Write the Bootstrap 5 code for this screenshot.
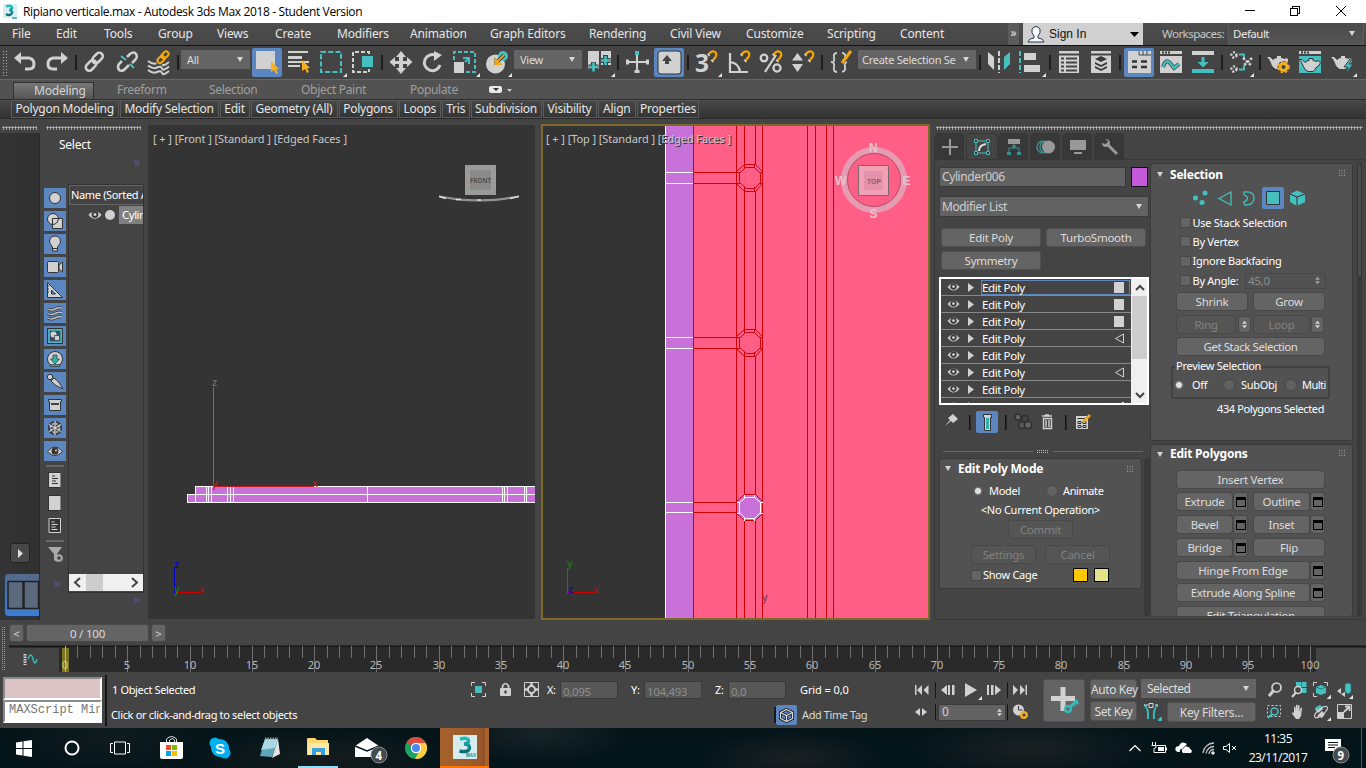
<!DOCTYPE html>
<html lang="en">
<head>
<meta charset="utf-8">
<title>Ripiano verticale.max - Autodesk 3ds Max 2018 - Student Version</title>
<meta name="viewport" content="width=device-width, initial-scale=1">
<link href="https://cdn.jsdelivr.net/npm/bootstrap@5.3.0/dist/css/bootstrap.min.css" rel="stylesheet">
<style>
body{width:1366px;height:768px;overflow:hidden;background:#444;color:#e6e6e6;font-family:"Noto Sans","Open Sans",sans-serif;font-size:11px;line-height:14px;letter-spacing:-.27px}
svg{display:block;overflow:visible;flex:none}
svg text{letter-spacing:0}
.ln{white-space:nowrap}
.titlebar{height:23px;background:#fff;color:#000;font-family:"Open Sans",sans-serif;font-size:12px;letter-spacing:-.36px}
.titletext{padding-left:4px}
.menubar{height:23px;background:linear-gradient(#4d4d4d,#464646);border-bottom:1px solid #111;font-size:12px;line-height:22px}
.menugrid{display:grid;flex:none;grid-template-columns:44px 48px 54px 59px 58px 62px 73px 80px 99px 81px 76px 81px 73px 108px;padding-left:12px;width:1008px;letter-spacing:-.15px}
.more{width:11px;flex:none;background:#5c5c5c;border-radius:2px;line-height:19px}
.signin{width:120px;flex:none;height:22px;background:#d0d0d0;color:#111;font-family:"Liberation Sans",sans-serif;letter-spacing:0}
.wslabel{width:85px;flex:none;text-align:right;padding-right:4px;color:#c8c8c8;letter-spacing:-.55px;font-size:11.5px}
.wsbox{width:136px;flex:none;background:linear-gradient(#4a4a4a,#555);border:1px solid #5c5c5c;border-top:0;font-size:11.5px;letter-spacing:-.5px}
.toolgrid{height:33px;display:grid;align-items:start;grid-template-columns:13px 32px 30px 8px 33px 30px 31px 4px 71px 34px 33px 31px 31px 8px 32px 31px 33px 29px 73px 30px 8px 29px 33px 7px 33px 32px 32px 30px 8px 29px 121px 8px 31px 31px 9px 32px 29px 5px 35px 32px 30px 8px 30px 8px 31px 33px 35px}
.toolgrid>svg{margin-top:4px;width:26px;height:28px}
.vsep{width:2px;background:#1d1d1d;height:15px;margin-top:9px}
.hot{background:#5c86c0;border-radius:2px}
.toolhot{width:30px;height:29px;margin-top:2px;padding:2px 0 0 2px}
.drop{background:#646464;height:19px;color:#dcdcdc;padding-left:6px;padding-right:7px}
.toolgrid .drop{margin-top:4px}
.grip-v{width:6px;background-image:radial-gradient(#a2a2a2 38%,transparent 48%);background-size:3px 3px}
.grip-h{height:4px;background-image:radial-gradient(#b0b0b0 45%,transparent 60%);background-size:3px 3px}
.ribtabs{height:20px;background:#525252;border-top:1px solid #666;color:#a0a0a0;font-size:12px;letter-spacing:-.3px;line-height:20px}
.ribgrid{display:grid;grid-template-columns:104px 92px 92px 109px 79px 40px;padding-left:13px;width:540px}
.rib-on{width:81px;height:17px;margin-top:2px;line-height:15px;background:linear-gradient(#777,#555);border:1px solid #303030;border-bottom:0;color:#d4d4d4;padding-left:20px;letter-spacing:-.2px}
.ribpanels{height:20px;background:linear-gradient(#484848,#333);border-top:1px solid #2c2c2c;border-bottom:1px solid #2a2a2a}
.ribbtns{display:grid;grid-template-columns:108.5px 100px 31px 88px 60px 43.5px 28.5px 72px 55px 39.5px 63px;margin-left:11px;font-size:12px;line-height:16px;letter-spacing:-.24px}
.ribbtns>span{border:1px solid #5b5b5b;height:18px;text-align:center;margin-right:1px;white-space:nowrap}
.work{height:505px}
.dockleft{width:40px;padding:7px 0 0 0}
.dockdark{margin-top:3px;height:487px;background:linear-gradient(90deg,#343434,#303030);padding-top:410px;overflow:hidden;border-right:1px solid #282828}
.playbtn{width:20px;height:20px;margin-left:10px;border:1px solid #232323;border-radius:3px;background:#484848}
.layoutbtn{width:37px;height:44px;margin:10px 0 0 4px;border:1px solid #243850;border-radius:4px 0 0 4px;background:linear-gradient(#556a88,#3c7dd6)}
.explorer{width:108px;padding:7px 0 0 4px}
.chev{color:#56568e;font-size:14px;line-height:8px}
.filtercol{width:22px;display:grid;grid-auto-rows:20px;row-gap:3px}
.filtercol>svg.f{width:22px;height:20px;background:#5c86c0}
.listbox{width:76px;height:409px;border:1px solid #333;overflow:hidden}
.listhead{height:20px;border:1px solid #666;border-width:1px 0 1px 1px;line-height:18px;padding-left:1px;color:#fff;letter-spacing:-.35px}
.objname{background:#808080;margin-left:2px;height:18px;line-height:18px;width:40px;padding-left:3px;color:#fff;font-size:11.5px;letter-spacing:-.5px}
.scrollx{height:17px;background:#f0f0f0}
.view-a{margin-top:6px;width:387px;height:494px;background:#343434}
.view-b{margin:5px 0 0 6px;width:389px;height:496px;border:2px solid #7d6a28}
.cmd{margin-left:4px;width:432px;padding-top:7px}
.tabs6{display:grid;grid-template-columns:repeat(6,32px);height:26px;margin-top:3px;width:192px}
.tabs6>span{background:#383838;border-right:2px solid #444;border-radius:5px 5px 0 0;display:grid;place-items:center;padding:1px 0 0 1px}
.tabs6>span.on{background:#444;border:1px solid #383838;border-bottom:0;padding-left:0}
.cmdbody{height:461px;border:1px solid #383838;border-right:0;border-radius:3px}
.cmdleft{width:215px;padding-left:5px;flex:none}
.fld{background:#626262;border:1px solid #3a3a3a;height:20px;color:#cfcfcf;padding:0 2px;line-height:18px;font-size:12px;letter-spacing:-.4px}
.pb{background:#646464;border:1px solid #505050;border-radius:3px;height:18px;line-height:18px;text-align:center;color:#dcdcdc;white-space:nowrap;flex:none;font-size:11.5px}
.roll .pb{box-shadow:0 0 0 1px #494949;border:0;height:17px;line-height:17px}
.pb.off{background:#555;color:#828282}
.stackbox{width:210px;height:128px;border:2px solid #fff;overflow:hidden;margin-left:-1px}
.stk{height:17px;width:190px;border-bottom:1px solid #888}
.stkname{width:149px;height:15px;border:1px solid transparent;color:#fff;line-height:15px;font-size:11.5px;letter-spacing:-.4px}
.stk.on .stkname{border-color:#5c86c0}
.ysc{width:17px;background:#f0f0f0;color:#333}
.roll{width:203px;background:#525252;border:1px solid #3a3a3a;border-radius:3px;color:#fff}
.roll .hd{font-weight:700;font-size:12px;letter-spacing:-.22px}
.rolla{height:131px;display:grid;grid-template-rows:19px 25px 13px 27px 22px 20px}
.rollb{height:278px;display:grid;grid-template-rows:21px 28px 19px 19px 20px 19px 23px 22px 23px 40px 22px}
.rollc{height:172px;display:grid;grid-template-rows:26px 22px 23px 23px 23px 22px 23px;overflow:hidden;border-bottom:0;align-items:start}
.tri{margin:0 7px 0 6px}
.bx{width:11px;height:11px;background:#646464;border:1px solid #474747;flex:none}
.rd{width:12px;height:12px;border-radius:50%;background:#626262;border:1px solid #4c4c4c;flex:none}
.rd.on{background:radial-gradient(#dedede 36%,#626262 52%)}
.w71{width:70px}.w56{width:55px}.w147{width:147px}.w132{width:132px}.w63{width:63px}.w99{width:100px;height:19px}
.in26{padding-left:26px}.in29{padding-left:29px}
.sm{width:13px;height:17px;background:#646464;border-radius:2px;box-shadow:0 0 0 1px #494949;display:grid;place-items:center;flex:none}
.sm i{width:10px;height:10px;border:1px solid #000;border-top-width:3px}
.swatch{width:15px;height:14px;border:1px solid #000}
.grpbox{width:159px;height:33px;border:2px solid #414141;margin:8px 0 0 20px;padding-top:4px;border-radius:2px}
.grpbox>b{position:absolute;left:2px;top:-8px;background:#525252;font-weight:400;line-height:12px;padding:0 1px}
.slider{height:22px;padding:0 0 0 9px;color:#ddd;letter-spacing:-.2px}
.slider .pb{border-color:#4a4a4a}
.ruler{height:27px}
.status{height:55px}
.mxs{width:99px;height:23px;border:2px solid;border-color:#8a8a8a #fff #fff #8a8a8a;font:12px/16px "Liberation Mono",monospace;color:#777;overflow:hidden;white-space:nowrap;letter-spacing:0}
.st1{display:grid;grid-template-columns:359px 29px 24px 23px 13px 71px 13px 71px 13px 72px 90px;height:25px;padding-left:5px;align-items:center;color:#fff;margin-top:4px;letter-spacing:-.35px}
.num{background:#575757;border:1px solid #3b3b3b;height:18px;width:58px;padding-left:2px;line-height:19px;color:#8e8e8e;font-size:11.5px}
.transport{display:grid;flex:none;grid-template-columns:20px 6px 24px 22px 20px 6px 20px;grid-template-rows:22px 22px;margin:6px 0 0 4px;align-items:center;align-content:start}
.tbar{width:1px;height:16px;background:#151515}
.keys{display:grid;grid-template-columns:47px;row-gap:2px;margin:6px 0 0 5px;align-content:start;flex:none}
.keys .pb{height:20px;line-height:20px;font-size:12px;letter-spacing:-.4px}
.navg{display:grid;flex:none;grid-template-columns:24px 22px 24px 20px;grid-template-rows:22px 22px;margin:6px 0 0 11px;align-items:center;align-content:start}
.taskbar{height:40px;background:radial-gradient(ellipse 90px 30px at 540px 5px,#182326,transparent),radial-gradient(ellipse 90px 26px at 790px 30px,#1b2022,transparent),radial-gradient(ellipse 120px 30px at 1030px 20px,#1a2022,transparent),radial-gradient(ellipse 130px 30px at 320px 30px,#151c1e,transparent),radial-gradient(ellipse 100px 30px at 110px 10px,#101c1f,transparent),#04151a;color:#fff;font-family:"Open Sans",sans-serif;font-size:12px}
.apps{display:grid;grid-template-columns:48px 48px 50px repeat(6,49px) 49px;height:40px;align-items:center;justify-items:center}
.apps>span{height:40px;width:100%;display:grid;place-items:center}
.maxtile{background:linear-gradient(90deg,#a5622c,#99562a 88%,#7f4a26 89%,#a5622c 92%);border-bottom:2px solid #ff7300}
.apps>.lit{border-bottom:2px solid #8fe0f5;width:40px}
.tray{display:grid;grid-template-columns:22px 24px 27px 21px 22px 66px 50px 5px;align-items:center;height:40px}
.clock{line-height:19px;letter-spacing:-.5px;margin-top:-1px}
</style>
</head>
<body>
<svg width="0" height="0" class="position-absolute">
<defs>
<symbol id="eye" viewBox="0 0 14 10" overflow="visible"><path d="M.5 5Q7-2.500 13.500 5 7 12.500.5 5z" fill="#d1d1d1"/><circle cx="7" cy="4.500" r="3.400" fill="#3a3a3a"/><circle cx="7" cy="4.500" r="1.500" fill="#d1d1d1"/></symbol>
<symbol id="hook" viewBox="0 0 14 14" overflow="visible"><path d="M3.500 4.500Q8-1 11 3q1.500 3-4 8" fill="none" stroke="#f4a600" stroke-width="2.200"/><path d="M2.500 4l2 2M6 10l2.500 2" stroke="#d7d7d7" stroke-width="1.500"/></symbol>
<symbol id="cur" viewBox="0 0 10 13" overflow="visible"><path d="M1 0l8 8-3 .5 2 3.500-2 1-2-4-3 2z" fill="#f5b01f"/></symbol>
<symbol id="fly" viewBox="0 0 4 4"><path d="M4 0v4H0z" fill="#e5e5e5"/></symbol>
<symbol id="dn" viewBox="0 0 6 5"><path d="M0 0h6L3 5z" fill="#d5d5d5"/></symbol>
<symbol id="pot" viewBox="0 0 22 15" overflow="visible"><path d="M0 3h3l3 3q2-2 4-2V2h4v2q2 0 3 1 5-2 4 2-1 3-4 4-1 3-3 4H9q-4-2-5-6L2 5z" fill="#d1d1d1"/></symbol>
<symbol id="ud" viewBox="0 0 6 9"><path d="M0 3.500L3 0l3 3.500zM0 5.500h6L3 9z" fill="#d5d5d5"/></symbol>
<symbol id="gd" viewBox="0 0 6 6"><path d="M0 0h1v1H0zM2.500 0h1v1h-1zM5 0h1v1H5zM0 2.500h1v1H0zM2.500 2.500h1v1h-1zM5 2.500h1v1H5zM0 5h1v1H0zM2.500 5h1v1h-1zM5 5h1v1H5z" fill="#a0a0a0"/></symbol>
<linearGradient id="t3" x2="0" y2="1"><stop stop-color="#1fc0bd"/><stop offset="1" stop-color="#0b6d77"/></linearGradient>
</defs></svg>

<header class="titlebar d-flex align-items-center">
<svg width="16" height="16" viewBox="0 0 16 16" style="margin-left:3px"><path d="M0 0h14v14H0z" fill="#d9eeee"/><path d="M3 2.500q5-2 6 1 0 2-2.500 2.500 3 .5 2.500 3Q7 12.500 3 10" fill="none" stroke="url(#t3)" stroke-width="2.400"/><path d="M9 14h5" stroke="#2aa" stroke-width="1.500"/></svg>
<span class="titletext ln flex-grow-1">Ripiano verticale.max - Autodesk 3ds Max 2018 - Student Version</span>
<svg width="121" height="20" viewBox="0 0 121 20" fill="none" stroke="#000" shape-rendering="crispEdges"><path d="M0 8.500h10M45.500 6.500h7v7h-7zM47.500 6V4.500h7v7H53"/><path d="M91 4l10 10m0-10L91 14" shape-rendering="auto"/></svg>
</header>

<nav class="menubar d-flex">
<div class="menugrid ln"><span>File</span><span>Edit</span><span>Tools</span><span>Group</span><span>Views</span><span>Create</span><span>Modifiers</span><span>Animation</span><span>Graph Editors</span><span>Rendering</span><span>Civil View</span><span>Customize</span><span>Scripting</span><span>Content</span></div>
<div class="more text-center">»</div>
<div class="signin d-flex align-items-center ms-1"><svg width="18" height="18" viewBox="0 0 18 18" class="ms-1"><path d="M1 17q1-4 6-4v-2Q4 8 5 4q4-5 8 0 1 4-2 7v2q5 0 6 4z" fill="#f4f7fb" stroke="#27364d"/></svg><span class="ms-1 flex-grow-1">Sign In</span><svg width="9" height="5" class="me-1"><path d="M0 0h9L4.500 5z" fill="#000"/></svg></div>
<span class="wslabel ln">Workspaces:</span>
<div class="wsbox d-flex align-items-center justify-content-between ps-1 pe-2"><span>Default</span><svg width="6" height="5"><use href="#dn"/></svg></div>
</nav>

<div class="toolgrid">
<span class="grip-v mt-1" style="height:26px;margin-left:2px"></span>
<svg><path d="M3 8h13q5 1 5 6t-5 5h-4" fill="none" stroke="#d1d1d1" stroke-width="3"/><path d="M8 2v12L1 8z" fill="#d1d1d1"/></svg>
<svg><path d="M21 8H8q-5 1-5 6t5 5h4" fill="none" stroke="#d1d1d1" stroke-width="3"/><path d="M16 2v12l7-6z" fill="#d1d1d1"/></svg>
<span class="vsep"></span>
<svg fill="none" stroke="#d1d1d1" stroke-width="2.500"><rect x="-6" y="-3.500" width="12" height="7" rx="3.500" transform="translate(8 15.500) rotate(-45)"/><rect x="-6" y="-3.500" width="12" height="7" rx="3.500" transform="translate(14.500 8) rotate(-45)"/></svg>
<svg fill="none" stroke="#d1d1d1" stroke-width="2.500"><path d="M11 7l3-3q4-3 6 0 2 3-1 6l-3 3M6 11l-3 3q-2 3 0 6 3 2 6-1l4-4"/><path d="M5 6l5 4M14 14l4 4" stroke="#45bfbf" stroke-width="2"/></svg>
<svg fill="none"><path d="M2 11q5 4 9 2t5 1 7-2M2 15.500q5 4 9 2t5 1 7-2M2 20q5 4 9 2t5 1 7-2" stroke="#d1d1d1" stroke-width="2"/><g stroke="#444" stroke-width="4"><rect x="-4" y="-2.500" width="8" height="5" rx="2.500" transform="translate(15 9.500) rotate(-45)"/></g><g stroke="#f5a70f" stroke-width="2"><rect x="-4" y="-2.500" width="8" height="5" rx="2.500" transform="translate(15 9.500) rotate(-45)"/><rect x="-4" y="-2.500" width="8" height="5" rx="2.500" transform="translate(19 5) rotate(-45)"/></g></svg>
<span class="vsep"></span>
<div class="drop d-flex align-items-center justify-content-between" style="width:69px"><span>All</span><svg width="6" height="5"><use href="#dn"/></svg></div>
<div class="hot toolhot"><svg width="26" height="26"><path d="M2 1h19v18H2z" fill="#d1d1d1"/><use href="#cur" x="16" y="11" width="10" height="13"/></svg></div>
<svg><path d="M2 1h20v2H2zM2 6h14v3H2zM2 11h21v2H2zM2 15h12v2H2z" fill="#d1d1d1"/><use href="#cur" x="15" y="10" width="10" height="13"/></svg>
<svg><path d="M2 2h20v20H2z" fill="none" stroke="#45bfbf" stroke-width="2" stroke-dasharray="5 2.270"/><use href="#fly" x="24" y="23" width="4" height="4"/></svg>
<svg><path d="M12 6h11v11H12z" fill="#45bfbf"/><path d="M19 4V2H3v20h16v-3" fill="none" stroke="#d1d1d1" stroke-width="2" stroke-dasharray="4 2"/></svg>
<span class="vsep"></span>
<svg><path d="M12 1l5 6h-3v4h4V7l5.500 5-5.500 5v-3h-4v4h3l-5 6-5-6h3v-4H6v3L.5 12 6 7v4h4V7H7z" fill="#d1d1d1"/></svg>
<svg><path d="M19 15a8 8 0 1 1-4-9.500" fill="none" stroke="#d1d1d1" stroke-width="3"/><path d="M13 1l8 4-8 6z" fill="#d1d1d1"/></svg>
<svg><path d="M2 10V2h21v20H14" fill="none" stroke="#45bfbf" stroke-width="2" stroke-dasharray="4 2"/><path d="M2 12h10v11H2z" fill="#d1d1d1"/><path d="M11 8h6v6M17 8l-4 4" fill="none" stroke="#45bfbf" stroke-width="2"/><use href="#fly" x="24" y="23" width="4" height="4"/></svg>
<svg><circle cx="10.500" cy="14" r="9.500" fill="#d1d1d1"/><circle cx="18" cy="6" r="5" fill="#45bfbf"/><path d="M19 5l-7 7" stroke="#333" stroke-width="3.600"/><path d="M9.500 7.500v7.500h7.500z" fill="#333"/><path d="M19 5l-6 6M10.500 9.500v4.500h4.500z" stroke="#f5a70f" stroke-width="1.800" fill="#f5a70f"/><use href="#fly" x="23" y="23" width="4" height="4"/></svg>
<div class="drop d-flex align-items-center justify-content-between" style="width:68px"><span>View</span><svg width="6" height="5"><use href="#dn"/></svg></div>
<svg><path d="M1 1h11v18H1zM14 1h10v14H14z" fill="#d1d1d1"/><path d="M6.500 12v10M1.500 17h10M18.500 5v11M13.500 10.500h10" stroke="#444" stroke-width="5"/><path d="M6.500 12.500v9M2 17h9M18.500 6v9M14 10.500h9" stroke="#45bfbf" stroke-width="2.600"/><use href="#fly" x="24" y="23" width="4" height="4"/></svg>
<span class="vsep"></span>
<svg><path d="M12 5v15M3 12h18" stroke="#d1d1d1" stroke-width="2"/><path d="M1 9.500h3v5H1zM21 9.500h3v5h-3zM9.500 20h5v3h-5z" fill="#d1d1d1"/><path d="M10 1h4v4h-4z" fill="#45bfbf"/></svg>
<div class="hot toolhot"><svg width="26" height="26"><rect x="2" y="1" width="23" height="23" rx="3" fill="#d1d1d1" stroke="#333"/><path d="M11 5l5 6h-3v3H9v-3H6z" fill="#444"/></svg></div>
<span class="vsep"></span>
<svg><text x="1" y="22" font-family="Open Sans" font-weight="bold" font-size="25" fill="#d1d1d1" textLength="14" lengthAdjust="spacingAndGlyphs">3</text><use href="#hook" x="11" y="0" width="14" height="14"/><use href="#fly" x="24" y="23" width="4" height="4"/></svg>
<svg><path d="M3 3v19h18M3 12q9 1 10 10" fill="none" stroke="#d1d1d1" stroke-width="2.200"/><use href="#hook" x="11" y="0" width="14" height="14"/></svg>
<svg fill="none" stroke="#d1d1d1" stroke-width="2.300"><circle cx="5" cy="8" r="3.300"/><circle cx="18" cy="18" r="3.600"/><path d="M17 5L6 22"/><use href="#hook" x="11" y="0" width="14" height="14"/></svg>
<svg><path d="M1 10.500L6.500 3l5.500 7.500zM1 14h11l-5.500 8z" fill="#d1d1d1"/><use href="#hook" x="11" y="0" width="14" height="14"/></svg>
<span class="vsep"></span>
<svg fill="none" stroke="#d1d1d1" stroke-width="1.800"><path d="M8 3Q4 3 5 8t-3 4q4 0 3 5t3 5M13 3q4 0 3 5M18 12q-3 1-2 5t-3 5"/><path d="M22 1l-9 12" stroke="#f5a70f" stroke-width="3"/></svg>
<div class="drop d-flex align-items-center justify-content-between" style="width:118px;padding-left:4px"><span class="ln">Create Selection Se</span><svg width="6" height="5"><use href="#dn"/></svg></div>
<span class="vsep"></span>
<svg><path d="M1 2l6 5v13l-6-6z" fill="#d1d1d1"/><path d="M12 1v22" stroke="#d1d1d1" stroke-width="2" stroke-dasharray="5 2"/><path d="M23 2l-6 5v13l6-6z" fill="#45bfbf"/></svg>
<svg><path d="M2 1v22" stroke="#45bfbf" stroke-width="2" stroke-dasharray="5 2"/><path d="M6 3h12v7H6zM6 15h16v7H6z" fill="#d1d1d1"/><use href="#fly" x="24" y="23" width="4" height="4"/></svg>
<span class="vsep"></span>
<svg><path d="M1 1h20v22H1z" fill="#d1d1d1"/><path d="M1 4.500h20M3 8.500h3M8 8.500h11M3 12.500h3M8 12.500h11M3 16.500h3M8 16.500h11M3 20.500h3M8 20.500h11" stroke="#444" stroke-width="2"/></svg>
<svg><path d="M1 1h20v22H1z" fill="#d1d1d1"/><path d="M1 4.500h20" stroke="#444" stroke-width="2"/><path d="M11 6l6 3-6 3-6-3zM5 12l6 3 6-3v2l-6 3-6-3zM5 16l6 3 6-3v2l-6 3-6-3z" fill="#3a3a3a"/></svg>
<span class="vsep"></span>
<div class="hot toolhot"><svg width="26" height="26"><path d="M2 1h23v22H2z" fill="#d1d1d1"/><path d="M13 1v4h12M17 1v4M21 1v4" stroke="#444" fill="none"/><path d="M6 11.500h5M15 11.500h6M6 17h5M15 17h6" stroke="#333" stroke-width="2.600"/></svg></div>
<svg><path d="M1 1h22v3H1zM1 6h22v17H1z" fill="#d1d1d1"/><path d="M3 2.500h2M6 2.500h2M9 2.500h2" stroke="#333" stroke-width="2"/><path d="M4 17q3-9 7-4t4 5 5-4" fill="none" stroke="#444" stroke-width="4"/><path d="M4 17q3-9 7-4t4 5 5-4" fill="none" stroke="#45bfbf" stroke-width="2.500"/></svg>
<svg><path d="M1 1h22v4H1z" fill="#d1d1d1"/><path d="M1 19h22v4H1zM10.500 7h3v5h4L12 17.500 6.500 12h4z" fill="#45bfbf"/></svg>
<span class="vsep"></span>
<svg><g fill="none" stroke="#d1d1d1" stroke-width="2.500" stroke-dasharray="2 1.500"><circle cx="5" cy="5" r="2.500"/><circle cx="5" cy="19" r="2.500"/></g><path d="M10 4.500h5v4M10 19.500h5v-4" fill="none" stroke="#45bfbf" stroke-width="2"/><path d="M14 8l9 8M23 8l-9 8" stroke="#d1d1d1" stroke-width="2.500" stroke-dasharray="2.500 1.500"/><use href="#fly" x="21" y="23" width="4" height="4"/></svg>
<span class="vsep"></span>
<svg><use href="#pot" x="0" y="4" width="22" height="15"/><circle cx="16.500" cy="17" r="6" fill="#444"/><circle cx="16.500" cy="17" r="3.500" fill="none" stroke="#f5b01f" stroke-width="3"/><circle cx="16.500" cy="17" r="5.500" fill="none" stroke="#f5b01f" stroke-width="1.500" stroke-dasharray="2.500 2"/></svg>
<svg><path d="M1 1h22v3H1z" fill="#d1d1d1"/><path d="M3 2.500h2M6 2.500h2M9 2.500h2" stroke="#333" stroke-width="2"/><path d="M1 6h22v17H1z" fill="#45bfbf"/><use href="#pot" x="1" y="6.500" width="22" height="15" stroke="#333"/></svg>
<svg><use href="#pot" x="0" y="4" width="22" height="15"/><path d="M19 9l-6 8h4l-2 7 7-10h-4l3-5z" fill="#45bfbf" stroke="#444"/><use href="#fly" x="22" y="23" width="4" height="4"/></svg>
</div>

<div class="ribtabs d-flex"><svg width="0" height="1"><path d="M2.500 1v37M4.500 1v37" stroke="#999" stroke-dasharray="1 1"/></svg><div class="ribgrid ln"><span class="rib-on">Modeling</span><span>Freeform</span><span>Selection</span><span>Object Paint</span><span>Populate</span><svg width="24" height="9" style="margin-top:5px"><rect x="0" y="1" width="13" height="7" rx="2" fill="#e8e8e8"/><path d="M4 3h6L7 6z" fill="#333"/><path d="M18 4h5l-2.500 3z" fill="#ccc"/></svg></div></div>
<div class="ribpanels"><div class="ribbtns"><span>Polygon Modeling</span><span>Modify Selection</span><span>Edit</span><span>Geometry (All)</span><span>Polygons</span><span>Loops</span><span>Tris</span><span>Subdivision</span><span>Visibility</span><span>Align</span><span>Properties</span></div></div>

<main class="work d-flex">
<aside class="dockleft"><div class="grip-h" style="margin:0 3px 0 2px"></div>
<div class="dockdark"><div class="playbtn d-grid" style="place-items:center"><svg width="5" height="9"><path d="M0 0l5 4.500L0 9z" fill="#ddd"/></svg></div>
<div class="layoutbtn"><svg width="36" height="42" fill="#5a697c" stroke="#222" stroke-width="1.500"><path d="M3 7.500h15v27H3zM19 7.500h14.500v27H19z"/></svg></div></div></aside>

<section class="explorer"><div class="grip-h" style="margin:0 7px 0 2px"></div>
<div class="ln" style="margin:8px 0 0 15px;color:#fff;font-size:12px">Select</div>
<div class="chev text-end pe-2" style="margin-top:6px">»</div>
<div class="d-flex" style="margin-top:18px">
<div class="filtercol" style="margin-top:4px">
<svg class="f"><circle cx="11" cy="10" r="5.500" fill="#d1d1d1" stroke="#333"/></svg>
<svg class="f" stroke="#333" fill="#d1d1d1"><circle cx="9" cy="8" r="5.500"/><path d="M8.500 7.500h10v10h-10z"/><path d="M8.500 13.500q5 0 6-6" fill="none"/></svg>
<svg class="f" stroke="#333" fill="#d1d1d1"><path d="M8.500 13Q5 9 5.500 7q1-5 5.500-5t5.500 5q.5 2-3 6v4h-5zM8.500 14.500h5"/></svg>
<svg class="f" stroke="#333" fill="#d1d1d1"><rect x="3.500" y="4.500" width="11" height="11" rx="1"/><path d="M15 8l3.500-3v10L15 12z"/></svg>
<svg class="f" stroke="#333" fill="#d1d1d1"><path d="M3.500 2.500l15 15h-15zM7.500 10v4h4z"/><path d="M3 6h2M3 9h2M3 12h2"/></svg>
<svg class="f" fill="none"><g stroke="#333" stroke-width="3"><path d="M4 6q3 2 7 0t7-1M4 10.500q3 2 7 0t7-1M4 15q3 2 7 0t7-1"/></g><g stroke="#c5c5c5" stroke-width="1.500"><path d="M4 6q3 2 7 0t7-1M4 10.500q3 2 7 0t7-1M4 15q3 2 7 0t7-1"/></g></svg>
<svg class="f"><path d="M3.500 2.500h15v15h-15z" stroke="#333" fill="none"/><path d="M5 4h12v12H5z" stroke="#45bfbf" stroke-width="1.500" fill="#3a4a66"/><circle cx="9.500" cy="8.500" r="3" fill="#d1d1d1"/><path d="M10.500 9.500h5v5h-5z" fill="#d1d1d1" stroke="#333" stroke-width=".7"/></svg>
<svg class="f"><circle cx="11" cy="10" r="7.500" fill="#d1d1d1" stroke="#333"/><path d="M9 6h4v4h2.500L11 15l-4.500-5H9zM6 15.500h10v2H6z" fill="#2fb1a8" stroke="#333" stroke-width=".7"/></svg>
<svg class="f" stroke="#333" fill="#d1d1d1"><path d="M7 9l3-3q5 3 9 11Q11 14 7 9z"/><circle cx="6" cy="5" r="2.700"/></svg>
<svg class="f" stroke="#333" fill="#d1d1d1"><path d="M4.500 4.500h13v2h-1v9h-11v-9h-1z"/><path d="M7 9h8" stroke-width="1.800"/></svg>
<svg class="f" fill="none"><g stroke="#333" stroke-width="3"><path d="M11 3v14M5 6.500l12 7M17 6.500l-12 7"/></g><circle cx="11" cy="10" r="6" stroke="#333" stroke-width="2"/><circle cx="11" cy="10" r="4.500" stroke="#bbb" stroke-dasharray="2 1.500" stroke-width="2"/><path d="M11 3v14M5 6.500l12 7M17 6.500l-12 7" stroke="#d1d1d1" stroke-width="1.300"/></svg>
<svg class="f"><path d="M3.500 10.500Q11 1.500 18.500 10.500 11 18.500 3.500 10.500z" fill="#d1d1d1" stroke="#333"/><circle cx="11" cy="10" r="3.500" fill="#333"/><circle cx="12" cy="9.500" r="1" fill="#ddd"/></svg>
<svg width="22" height="20"><path d="M2 2h18" stroke="#888"/><path d="M4 8h13v16H4z" fill="#333"/><path d="M5 9h11.500v14H5z" fill="#d1d1d1"/><path d="M8 12h3M8 14.500h6M8 17h4M8 19.500h6" stroke="#333" stroke-width="1.200"/></svg>
<svg width="22" height="20"><path d="M4 8h13v16H4z" fill="#333"/><path d="M5 9h11.500v14H5z" fill="#d1d1d1"/></svg>
<svg width="22" height="20"><path d="M5 8.500h11.500v14H5z" fill="#333" stroke="#d1d1d1"/><path d="M7.500 12h3M7.500 14.500h6M7.500 17h4M7.500 19.500h6" stroke="#ddd" stroke-width="1.200"/></svg>
<svg width="22" height="20"><path d="M2 8h18" stroke="#888"/><path d="M4 14h14l-5 7v8l-3-2v-6z" fill="#aaa"/><circle cx="15" cy="25" r="2.800" fill="#444" stroke="#aaa" stroke-width="2"/></svg>
<span class="chev text-center" style="padding:23px 0 0 4px">»</span>
</div>
<div class="listbox" style="margin-left:2px"><div class="listhead ln">Name (Sorted A</div>
<div class="d-flex align-items-center" style="height:19px;padding-left:19px"><svg width="14" height="10"><use href="#eye"/></svg><svg width="12" height="12" style="margin-left:3px"><circle cx="5" cy="6" r="5" fill="#d1d1d1"/></svg><span class="objname ln">Cylin</span></div>
<div style="height:350px"></div>
<div class="scrollx d-flex align-items-center"><svg width="74" height="17"><path d="M17 0h17v17H17z" fill="#cdcdcd"/><path d="M11 4L6 8.500l5 4.500M63 4l5 4.500-5 4.500" fill="none" stroke="#444" stroke-width="2"/></svg></div></div>
</div>
<div class="chev text-end pe-2" style="margin-top:2px">»</div>
</section>

<svg class="view-a" viewBox="0 0 387 494" font-family="Noto Sans" font-size="11" fill="#c8c8c8">
<text x="5" y="18" textLength="194">[ + ] [Front ] [Standard ] [Edged Faces ]</text>
<g><path d="M291 71q40 8 80 0-14 5-40 5t-40-5z" fill="#888" stroke="#999"/><path d="M291 71.500l7 2M362 73.500l9-2M308 74.500h5M329 75h4" stroke="#ddd" stroke-width="1.500"/><path d="M317 40h31v30h-31z" fill="#9b9b9b"/><path d="M322 45h21v20h-21z" fill="#8a8a8a"/><text x="322" y="58" font-size="7" font-weight="bold" fill="#505050" textLength="21" lengthAdjust="spacingAndGlyphs">FRONT</text></g>
<g shape-rendering="crispEdges" fill="none"><path d="M47 361h340v16H39v-8h8z" fill="#c771d9"/><path d="M387 361.500H47.500v16M387 369.500H39.500v8H387" stroke="#fff"/><path d="M58.500 361v16M60.500 361v16M63.500 361v16M79.500 361v16M82.500 361v16M85.500 361v16M219.500 361v16M354.500 361v16M356.500 361v16M359.500 361v16M376.500 361v16M378.500 361v16" stroke="#fff"/><path d="M65.500 262v99" stroke="#707070"/><path d="M65 361.500h101" stroke="#c01818"/><path d="M26.500 443v25" stroke="#00c"/><path d="M27 467.500h27" stroke="#c00"/></g>
<g font-size="11"><text x="64" y="261" fill="#777">z</text><text x="64" y="362" fill="#b02626">y</text><text x="164" y="362" fill="#b02626">x</text><text x="26" y="443" fill="#00c">z</text><text x="26" y="468" fill="#0a8a0a">y</text><text x="51" y="468" fill="#b01010">x</text></g>
</svg>

<div class="view-b"><svg width="385" height="492" viewBox="0 0 385 492" style="background:#343434;overflow:hidden" font-family="Noto Sans" font-size="11">
<g shape-rendering="crispEdges" fill="none"><path d="M122 0h28v492h-28z" fill="#c771d9"/><path d="M150 0h235v492H150z" fill="#ff5f87"/>
<path d="M122.500 0v492M122 46.500h28M122 57.500h28M122 211.500h28M122 222.500h28M122 376.500h28M122 386.500h28" stroke="#fff"/>
<g stroke="#d00005"><path d="M150.500 0v492M193.500 0v492M219.500 0v492M264.500 0v492M272.500 0v492M283.500 0v492M290.500 0v492M150 46.500h43M150 57.500h43M150 211.500h43M150 222.500h43M150 376.500h43M150 386.500h43M201.500 0v39M212.500 0v39M201.500 65v139M212.500 65v139M201.500 230v138M212.500 230v138M201.500 395v97M212.500 395v97"/></g></g>
<g stroke="#d00005" fill="none"><g id="oct"><path d="M201.500 38.500h11l7 7v12l-7 8h-11l-8-8v-12zM202.500 41.500h9l6 6v9l-6 6h-8l-7-6v-9z"/><path d="M201.500 38v4M211.500 38v4M201.500 61v4M211.500 61v4M193 46.500h4M193 57.500h4M216 46.500h4M216 57.500h4"/></g><use href="#oct" y="165"/></g>
<path d="M201.500 368.500h11l7 7v12l-7 7h-11l-8-7v-12z" fill="#c771d9" stroke="#d00005"/><path d="M202.500 371.500h9l6 5v10l-6 6h-9l-6-6v-10zM201.500 369v3M211.500 369v3M201.500 392v3M211.500 392v3M194 376.500h3M194 387.500h3M217 376.500h3M217 387.500h3" fill="none" stroke="#fff"/>
<text x="3" y="17" textLength="185" fill="#333" transform="translate(1 1)">[ + ] [Top ] [Standard ] [Edged Faces ]</text><text x="3" y="17" textLength="185" fill="#c8c8c8">[ + ] [Top ] [Standard ] [Edged Faces ]</text>
<circle cx="331" cy="54" r="30" fill="none" stroke="#e79bb1" stroke-width="6"/><circle cx="331" cy="54" r="26.500" fill="none" stroke="#a9566f"/><path d="M315.500 39.500h30v30h-30z" fill="#f1a0b6" stroke="#7a6a6e"/><path d="M321 45h19v19h-19z" fill="#e592ab"/>
<g font-weight="bold" font-family="Liberation Sans" font-size="12" fill="#e6c3ce"><text x="324" y="57.500" font-size="8" fill="#8a5b6b" textLength="14" lengthAdjust="spacingAndGlyphs">TOP</text><text x="326" y="26">N</text><text x="326.500" y="92">S</text><text x="359.500" y="59">E</text><text x="292" y="59">W</text></g>
<g shape-rendering="crispEdges"><path d="M24.500 442v25" stroke="#0a8a0a"/><path d="M25 466.500h28" stroke="#c00"/></g>
<g><text x="24" y="441" fill="#0a8a0a">y</text><text x="25" y="467" fill="#00c">z</text><text x="50" y="467" fill="#b01010">x</text><text x="219" y="475" fill="#6b3a3a">y</text></g>
</svg></div>

<aside class="cmd"><div class="grip-h" style="margin:0 3px 0 2px"></div>
<div class="tabs6">
<span><svg width="16" height="16"><path d="M8 0v16M0 8h16" stroke="#999" stroke-width="2"/></svg></span>
<span class="on"><svg width="16" height="16" fill="none" stroke="#45bfbf"><path d="M2 2h12v12H2z"/><path d="M.5.5h3v3h-3zM12.500.5h3v3h-3zM.5 12.500h3v3h-3zM12.500 12.500h3v3h-3z" fill="#333"/><path d="M5 12q0-6 7-7" stroke="#ddd" stroke-width="2"/></svg></span>
<span><svg width="14" height="16"><path d="M1 0h12v5H1z" fill="#999"/><path d="M7 5v4M2 13V9h10v4" stroke="#3a8f8f" fill="none"/><path d="M0 13h4v3H0zM10 13h4v3h-4zM5.500 6h3v3h-3z" fill="#3a8f8f"/></svg></span>
<span><svg width="18" height="14"><path d="M6 1a6 6 0 0 0 0 12M9 1a6 6 0 0 0 0 12" fill="none" stroke="#3a8f8f" stroke-width="1.500"/><circle cx="11.500" cy="7" r="6.500" fill="#999"/></svg></span>
<span><svg width="16" height="14"><path d="M0 0h16v10H0zM4 12h8v2H4z" fill="#999"/></svg></span>
<span><svg width="16" height="16"><path d="M5 5l10 10" stroke="#999" stroke-width="3"/><path d="M3 0l3 2-1 2-2 1-3-1q0 4 4 4t4-4-5-4z" fill="#999"/></svg></span>
</div>
<div class="cmdbody d-flex"><div class="cmdleft">
<div class="d-flex" style="margin-top:7px"><div class="fld" style="width:187px;margin-left:-1px">Cylinder006</div><div style="margin-left:5px;width:17px;height:20px;background:#c45ada;border:1px solid #111"></div></div>
<div class="fld d-flex align-items-center justify-content-between" style="width:210px;height:21px;margin:9px 0 0 -1px;padding-right:6px"><span>Modifier List</span><svg width="6" height="5"><use href="#dn"/></svg></div>
<div class="d-flex" style="margin:11px 0 0 1px;gap:5px"><div class="pb w99">Edit Poly</div><div class="pb w99">TurboSmooth</div></div>
<div style="margin:4px 0 0 1px"><div class="pb w99">Symmetry</div></div>
<div class="stackbox d-flex" style="margin-top:7px"><div id="stack"></div><div class="ysc"><svg width="16" height="124"><path d="M1 17h15v63H1z" fill="#cdcdcd"/><path d="M5 11l4-4 4 4M5 114l4 4 4-4" fill="none" stroke="#444" stroke-width="2"/></svg></div></div>
<svg width="210" height="32" style="margin:1px 0 0 -1px"><g transform="translate(0 4)"><path d="M6 16l5-6-2-2 5-4 5 5-5 4-2-2z" fill="#d1d1d1"/><path d="M30 5h1.500v15H30zM66 5h1.500v15H66zM126 5h1.500v15H126z" fill="#111"/><rect x="37" y="1" width="22" height="22" rx="2" fill="#5c86c0"/><path d="M44.500 4.500h8v3h-1v13h-6v-13h-1z" fill="#d1d1d1" stroke="#333"/><path d="M47 8h3v11h-3z" fill="#2fb1b1"/><g fill="none" stroke="#303030" stroke-width="1.600"><circle cx="79" cy="7" r="3" fill="#666"/><circle cx="86" cy="9" r="3.500"/><circle cx="83" cy="15" r="3.500" fill="#555"/><circle cx="89" cy="15" r="3.500" fill="#666"/></g><path d="M103 6h10M106 5h4M104.500 8.500h8v10h-8zM107 10v7M110 10v7" fill="none" stroke="#d1d1d1" stroke-width="1.400"/><path d="M137 6h12v13h-12z" fill="#d1d1d1"/><path d="M138.500 8.500h8M139 11.500h3v2h-3zM144 11.500h3v2h-3zM139 15.500h3v2h-3zM144 15.500h3v2h-3z" fill="none" stroke="#333"/><path d="M151 5l-7 7" stroke="#f5a70f" stroke-width="2.600"/></g></svg>
<svg width="206" height="20"><path d="M3 13.500h90M113 13.500h90" stroke="#666"/><path d="M97 12.500h12M97 14.500h12" stroke="#bbb" stroke-dasharray="1 1"/></svg>
<div class="d-flex"><div class="roll rolla" style="margin-left:-1px">
<div class="d-flex align-items-center hd"><svg width="6" height="5" style="margin:0 7px 0 5px"><use href="#dn"/></svg><span class="flex-grow-1 ln">Edit Poly Mode</span><svg width="6" height="6" class="me-2"><use href="#gd"/></svg></div>
<div class="d-flex align-items-center ln" style="padding-left:32px"><span class="rd on"></span><span style="width:62px;padding-left:5px">Model</span><span class="rd"></span><span style="padding-left:5px;letter-spacing:-.4px">Animate</span></div>
<div class="text-center ln">&lt;No Current Operation&gt;</div>
<div class="d-flex align-items-center justify-content-center"><span class="pb off w63">Commit</span></div>
<div class="d-flex align-items-center" style="padding-left:32px;gap:11px"><span class="pb off w63">Settings</span><span class="pb off w63">Cancel</span></div>
<div class="d-flex align-items-center ln" style="padding-left:31px"><span class="bx"></span><span style="padding-left:1px;width:91px">Show Cage</span><span class="swatch" style="background:#ffc800"></span><span class="swatch" style="background:#e4e48c;margin-left:6px"></span></div>
</div><span style="width:6px;height:158px;background:#3a3a3a;border-radius:3px;margin-left:2px"></span></div>
</div>
<div style="margin:3px 0 0 0;width:203px;flex:none">
<div class="roll rollb">
<div class="d-flex align-items-center hd"><svg width="6" height="5" class="tri"><use href="#dn"/></svg><span class="flex-grow-1">Selection</span><svg width="6" height="6" style="margin:-3px 7px 0 0"><use href="#gd"/></svg></div>
<svg width="200" height="28" fill="#45bfbf"><g transform="translate(1 0)"><circle cx="43.500" cy="13" r="2.500"/><circle cx="53" cy="8" r="2.500"/><circle cx="50" cy="17.500" r="2.500"/><path d="M79 7v13L67 13.500z" fill="none" stroke="#45bfbf" stroke-width="1.300"/><path d="M92 7q10-1 10 6t-9 7q-3-3 1-4 3-3 0-5-3-1-2-4z" fill="none" stroke="#45bfbf" stroke-width="1.300"/><rect x="110" y="2" width="22" height="22" rx="2" fill="#5c86c0"/><path d="M114.500 6.500h13v13h-13z" stroke="#333"/><path d="M138 9l7-3.500L153 9v8l-8 4-7-4z"/><path d="M138 9l7 3 8-3M145 12v9" stroke="#333" fill="none"/></g></svg>
<div class="in29 d-flex align-items-center ln"><span class="bx"></span><span>&thinsp;Use Stack Selection</span></div>
<div class="in29 d-flex align-items-center ln"><span class="bx"></span><span>&thinsp;By Vertex</span></div>
<div class="in29 d-flex align-items-center ln"><span class="bx"></span><span>&thinsp;Ignore Backfacing</span></div>
<div class="in29 d-flex align-items-center ln"><span class="bx"></span><span style="width:54px">&thinsp;By Angle:</span><span class="num d-flex align-items-center justify-content-between" style="width:81px;height:16px;background:#525252;border-color:#484848;padding-right:5px;line-height:14px">45,0<svg width="5" height="9" opacity=".6"><use href="#ud"/></svg></span></div>
<div class="in26 d-flex align-items-center" style="gap:7px"><span class="pb w71">Shrink</span><span class="pb w71">Grow</span></div>
<div class="in26 d-flex align-items-center"><span class="pb off" style="width:58px">Ring</span><span class="sm" style="margin-left:4px;width:11px;height:15px"><svg width="5" height="9"><use href="#ud"/></svg></span><span class="pb off w56" style="margin-left:4px">Loop</span><span class="sm" style="margin-left:3px;width:11px;height:15px"><svg width="5" height="9"><use href="#ud"/></svg></span></div>
<div class="in26 d-flex align-items-center"><span class="pb w147" style="letter-spacing:-.45px">Get Stack Selection</span></div>
<div><div class="grpbox position-relative d-flex align-items-center ln"><b>Preview Selection</b><span class="rd on"></span><span style="width:38px;padding-left:7px">Off</span><span class="rd"></span><span style="width:50px;padding-left:6px">SubObj</span><span class="rd"></span><span style="padding-left:5px;letter-spacing:-.5px">Multi</span></div></div>
<div class="text-end align-self-center ln" style="padding-right:28px;letter-spacing:-.4px">434 Polygons Selected</div>
</div>
<div class="roll rollc" style="margin-top:3px">
<div class="d-flex align-items-center hd" style="height:18px"><svg width="6" height="5" class="tri"><use href="#dn"/></svg><span class="flex-grow-1">Edit Polygons</span><svg width="6" height="6" style="margin:-2px 7px 0 0"><use href="#gd"/></svg></div>
<div class="in26"><div class="pb w147">Insert Vertex</div></div>
<div class="in26 d-flex"><span class="pb w56">Extrude</span><span class="sm" style="margin-left:2px"><i></i></span><span class="pb w56" style="margin-left:7px">Outline</span><span class="sm" style="margin-left:2px"><i></i></span></div>
<div class="in26 d-flex"><span class="pb w56">Bevel</span><span class="sm" style="margin-left:2px"><i></i></span><span class="pb w56" style="margin-left:7px">Inset</span><span class="sm" style="margin-left:2px"><i></i></span></div>
<div class="in26 d-flex"><span class="pb w56">Bridge</span><span class="sm" style="margin-left:2px"><i></i></span><span class="pb w71" style="margin-left:7px">Flip</span></div>
<div class="in26 d-flex" style="gap:2px"><span class="pb w132">Hinge From Edge</span><span class="sm"><i></i></span></div>
<div class="in26 d-flex" style="gap:2px"><span class="pb w132" style="letter-spacing:-.4px">Extrude Along Spline</span><span class="sm"><i></i></span></div>
<div class="in26"><div class="pb w147" style="letter-spacing:-.4px">Edit Triangulation</div></div>
</div></div>
<div style="width:5px;height:454px;background:#383838;border-radius:3px;margin:3px 0 0 4px"><div style="height:115px;background:#4c4c4c;border:1px solid #303030;border-radius:3px"></div></div>
</div></aside>
</main>

<div class="slider d-flex" style="gap:2px"><span class="pb" style="width:15px">&lt;</span><span class="pb" style="width:123px">0 / 100</span><span class="pb" style="width:15px">&gt;</span></div>
<svg class="ruler" id="ruler" width="1366" height="27" font-family="Noto Sans" font-size="11"></svg>

<footer class="status d-flex">
<div style="padding:4px 0 0 3px;width:105px;flex:none"><div class="mxs" style="background:#dcc3c5"></div><div class="mxs" style="background:#fff;padding-left:4px">MAXScript Min</div></div>
<div style="width:2px;margin:2px 0 2px;background:#161616;flex:none"></div>
<div style="width:804px;flex:none"><div class="st1 ln"><span>1 Object Selected</span>
<svg width="15" height="15" fill="none" stroke="#d1d1d1"><path d="M.5 4V.5H4M11 .5h3.500V4M14.500 11v3.500H11M4 14.500H.5V11"/><path d="M4 4h7v7H4z" fill="#45bfbf" stroke="none"/></svg>
<svg width="11" height="15"><path d="M2.500 7V4q3-5 6 0v3" fill="none" stroke="#d1d1d1" stroke-width="1.700"/><rect y="6" width="11" height="8" rx="1" fill="#d1d1d1"/><path d="M5.500 8.500v3" stroke="#333" stroke-width="2"/></svg>
<svg width="15" height="15"><path d="M.5.5h14v14H.5z" fill="none" stroke="#d1d1d1"/><path d="M7.500 1v13M1 7.500h13" stroke="#d1d1d1" stroke-width="2.500"/><circle cx="7.500" cy="7.500" r="3.500" fill="#444" stroke="#d1d1d1" stroke-width="2"/></svg>
<span>X:</span><span class="num">0,095</span><span>Y:</span><span class="num">104,493</span><span>Z:</span><span class="num">0,0</span><span style="letter-spacing:-.1px">Grid = 0,0</span></div>
<div class="d-flex align-items-center ln" style="height:25px;padding-left:4px;color:#fff"><span style="width:663px;letter-spacing:-.33px">Click or click-and-drag to select objects</span><span style="width:2px;height:16px;background:#1a1a1a"></span><span class="hot" style="width:21px;height:20px;padding:3px"><svg width="15" height="15" fill="none" stroke="#222" stroke-width="3"><path d="M7.500 1.500l6 3v6l-6 3-6-3v-6zM1.500 4.500l6 3 6-3M7.500 7.500v6"/><path d="M7.500 1.500l6 3v6l-6 3-6-3v-6zM1.500 4.500l6 3 6-3M7.500 7.500v6" stroke="#ddd" stroke-width="1.200"/></svg></span><span style="color:#d8d8d8;padding-left:5px;letter-spacing:-.4px">Add Time Tag</span></div></div>
<div class="transport">
<svg width="14" height="12" fill="#d1d1d1"><path d="M0 1h1.500v10H0zM7 1v10L2 6zM13.500 1v10l-5-5z"/></svg><span class="tbar"></span>
<svg width="14" height="12" fill="#d1d1d1"><path d="M6 1v10L0 6zM7 1h2v10H7zM11 1h2.500v10H11z"/></svg>
<svg width="18" height="16" fill="#d1d1d1"><path d="M0 1l12 7-12 7z"/><use href="#fly" x="13" y="14" width="4" height="4"/></svg>
<svg width="14" height="12" fill="#d1d1d1"><path d="M8 1v10l6-5zM0 1h2v10H0zM4 1h2.500v10H4z"/></svg><span class="tbar"></span>
<svg width="14" height="12" fill="#d1d1d1"><path d="M12.500 1H14v10h-1.500zM7 1v10l5-5zM0 1v10l5-5z"/></svg>
<svg width="12" height="8" fill="#d1d1d1"><path d="M5 0v8L0 4zM7 0v8l5-4z"/></svg><span class="tbar"></span>
<div class="fld d-flex align-items-center justify-content-between" style="grid-column:span 3;width:68px;height:17px;padding:0 3px;margin-left:-3px">0<svg width="5" height="9"><use href="#ud"/></svg></div><span class="tbar"></span>
<svg width="16" height="16"><circle cx="5.500" cy="6" r="5.500" fill="#d1d1d1"/><path d="M5.500 2v4h4" stroke="#333" fill="none"/><circle cx="11" cy="11" r="2.800" fill="#444" stroke="#f5b01f" stroke-width="2.400"/></svg>
</div>
<div class="pb" style="width:42px;height:43px;margin:6px 0 0 10px"><svg width="40" height="40"><path d="M19 7v24M7 18.500h24" stroke="#d1d1d1" stroke-width="5"/><path d="M33 20l-7 7M32 21l2 3M29 24l2 2" stroke="#3bb" stroke-width="2.500"/><circle cx="24" cy="29" r="3" fill="none" stroke="#3bb" stroke-width="2.500"/></svg></div>
<div class="keys"><span class="pb">Auto Key</span><span class="pb">Set Key</span></div>
<div style="margin:6px 0 0 4px;width:115px;flex:none"><div class="drop d-flex align-items-center justify-content-between" style="font-size:12px;letter-spacing:-.5px"><span>Selected</span><svg width="6" height="5"><use href="#dn"/></svg></div>
<div class="d-flex" style="margin-top:4px;padding-left:2px"><svg width="24" height="20" fill="none" stroke="#3bb" stroke-width="2"><path d="M1 3q5 3 4 14M15 3q-5 3-4 14"/><path d="M6 1.500h4v4H6z" stroke="#ddd" stroke-width="1"/><path d="M1 3h4M12 3h3" stroke="#ddd" stroke-width="1"/><use href="#fly" x="15" y="15" width="4" height="4"/></svg><span class="pb" style="width:89px;height:20px;line-height:20px;font-size:12px">Key Filters...</span></div></div>
<div class="navg">
<svg width="16" height="16" fill="none" stroke="#d1d1d1"><circle cx="9.500" cy="5.500" r="4.500" stroke-width="1.700"/><path d="M6.500 8.500L2 14" stroke-width="3"/></svg>
<svg width="16" height="16" fill="none"><path d="M5 0h5v5H5zM10.500 0h5v5h-5zM10.500 6h5v5h-5z" fill="#45bfbf"/><circle cx="7" cy="8" r="3.500" fill="#444" stroke="#d1d1d1" stroke-width="1.500"/><path d="M5 10.500L1 15" stroke="#d1d1d1" stroke-width="2.200"/></svg>
<svg width="16" height="16" fill="none" stroke="#d1d1d1"><path d="M.5 4V.5H4M11 .5h3.500V4M4 14.500H.5V11"/><path d="M3 5l5-2 5 2v6l-5 2-5-2z" fill="#45bfbf" stroke="none"/><path d="M3 5l5 2 5-2" stroke="#277"/><use href="#fly" x="14" y="13" width="4" height="4"/></svg>
<svg width="16" height="16"><path d="M8 2l3-1 3 1v8l-3 2-3-2z" fill="#45bfbf" stroke="#277" stroke-width=".7"/><path d="M0 9l4-3v6zM4 12l4-2v5z" fill="#d1d1d1"/><use href="#fly" x="12" y="13" width="4" height="4"/></svg>
<svg width="16" height="16" fill="none"><path d="M.5 1.500h13v11H.5z" stroke="#d1d1d1" stroke-dasharray="2 2"/><circle cx="7.500" cy="7.500" r="3.500" fill="#444" stroke="#45bfbf" stroke-width="1.500"/><path d="M5 10l-4 4" stroke="#45bfbf" stroke-width="2.200"/></svg>
<svg width="14" height="16"><path d="M3 9V3q1-1 1.500 0L5 7V1q1-1 1.500 0L7 7V1.500q1-1 1.500 0V8l1-4q1-1 1.500 0l-1 8-2 3H5L1 9.500q0-2 2-.5z" fill="#d1d1d1"/></svg>
<svg width="18" height="16" fill="none"><path d="M2 5l5-4 3 4-5 4zM4 12l5-5 3 3-3 4z" fill="#d1d1d1"/><path d="M2 4q4-4 8-1l-5 4z" fill="#45bfbf"/><ellipse cx="8" cy="8" rx="8" ry="3" stroke="#d1d1d1" transform="rotate(-40 8 8)"/><use href="#fly" x="14" y="13" width="4" height="4"/></svg>
<svg width="16" height="16"><path d="M.5.5h14v14H.5z" fill="none" stroke="#d1d1d1"/><path d="M1 8h6v6H1z" fill="#d1d1d1"/><path d="M7 8l5-5M8 2.500h4.500V7" stroke="#d1d1d1" stroke-width="1.800" fill="none"/></svg>
</div>
</footer>

<footer class="taskbar d-flex justify-content-between">
<div class="apps">
<span><svg width="16" height="17" fill="#fff"><path d="M0 2.500l6.500-1V8H0zM7.500 1.300L16 0v8H7.500zM0 9h6.500v6.500l-6.500-1zM7.500 9H16v8l-8.500-1.300z"/></svg></span>
<span><svg width="16" height="16"><circle cx="8" cy="8" r="6.500" fill="none" stroke="#fff" stroke-width="2"/></svg></span>
<span style="padding-right:2px"><svg width="20" height="14" fill="none" stroke="#fff"><path d="M4.500 1v12h11V1zM3 2.500H.5v9H3M17 2.500h2.500v9H17"/></svg></span>
<span><svg width="24" height="24"><path d="M7.500 7V3q5-5 10 0v4M10.500 7V4q3-3 5 0v3" fill="none" stroke="#ddd"/><path d="M1 6h23v15q0 2-2 2H3q-2 0-2-2z" fill="#fff"/><path d="M7 9h5v5H7z" fill="#f25022"/><path d="M13 9h5v5h-5z" fill="#7fba00"/><path d="M7 15h5v5H7z" fill="#00a4ef"/><path d="M13 15h5v5h-5z" fill="#ffb900"/></svg></span>
<span><svg width="22" height="22"><circle cx="11" cy="11" r="9" fill="#00aff0"/><circle cx="6" cy="6" r="5.500" fill="#00aff0"/><circle cx="16" cy="16" r="5.500" fill="#00aff0"/><text x="6" y="16.500" font-family="Liberation Sans" font-weight="bold" font-size="15" fill="#fff">S</text></svg></span>
<span><svg width="24" height="22"><path d="M8 2h13l-6 18-12-1z" fill="#5fa5ba"/><path d="M8 2h13l-3 9L4 13z" fill="#a8d8e4"/><path d="M8 1.500h13" stroke="#999" stroke-width="2" stroke-dasharray="1.500 1"/><path d="M21 2l2 15-8 4z" fill="#e2e2e2"/></svg></span>
<span class="lit"><svg width="22" height="20"><path d="M0 2q0-1 1-1h7l2 2h11v15H0z" fill="#ffd96a"/><path d="M1 6h21v12H1z" fill="#ffe9a5"/><path d="M5 18v-7h13v7h-4v-3H9v3z" fill="#35a2e0"/></svg></span>
<span><svg width="24" height="22"><path d="M0 9l12-8 12 8v11H0z" fill="#fff"/><path d="M0 9l12 5 12-5" fill="none" stroke="#071418" stroke-width="1.500"/><circle cx="24" cy="18" r="8" fill="#444b4f" stroke="#888"/><text x="20.500" y="22.500" font-size="11.500" font-weight="bold" fill="#fff" font-family="Open Sans">4</text></svg></span>
<span><svg width="22" height="22"><circle cx="11" cy="11" r="11" fill="#1da362"/><path d="M11 11L1.500 5.500A11 11 0 0 1 20.500 5.500z" fill="#dd4b3e"/><path d="M11 6h9.800A11 11 0 0 1 10 22l5-9z" fill="#ffcd42"/><circle cx="11" cy="11" r="5.200" fill="#fff"/><circle cx="11" cy="11" r="4" fill="#4a8af4"/></svg></span>
<span class="maxtile"><svg width="24" height="24"><path d="M0 0h24v24H0z" fill="#d7ecec"/><path d="M7 4q8-2 8.500 1.500 0 3-4.500 3.500 5.500 0 5.500 4-1 5-10 3" fill="none" stroke="url(#t3)" stroke-width="3.500"/><text x="13" y="22" font-size="4.500" font-weight="bold" fill="#138a90" font-family="Liberation Sans">MAX</text></svg></span>
</div>
<div class="tray">
<svg width="12" height="8"><path d="M.5 7L6 1.500 11.500 7" fill="none" stroke="#fff" stroke-width="1.200"/></svg>
<svg width="16" height="12" fill="none" stroke="#fff"><path d="M5.500 3.500h9v7h-9M1.500 0v3M4.500 0v3M.5 3.500h4.500v2l-2 1v4h3"/><path d="M7 5h6v4H7z" fill="#fff" stroke="none"/><path d="M15.500 5.500v3"/></svg>
<svg width="17" height="12" fill="#fff"><path d="M3 10q-4-1-2-5 2-1 3-1 2-5 6-3l2 1-5 5q-3 0-2 3z"/><path d="M8 11q-3-3 1-5 1-3 4-1 2 0 2 2 3 1 1 4z"/></svg>
<svg width="14" height="14" fill="none" stroke="#ccc"><path d="M1 12A11 11 0 0 1 12 2M4 12.500a8 8 0 0 1 8-7M7 13a5 5 0 0 1 5-4.500" stroke-width="1.300"/><circle cx="11" cy="12" r="1.300" fill="#fff"/></svg>
<svg width="15" height="12" fill="none" stroke="#fff"><path d="M.5 4.500H3l3.500-3v9l-3.500-3H.5zM9 4l4 4m0-4L9 8"/></svg>
<div class="clock text-center"><div>11:35</div><div>23/11/2017</div></div>
<svg width="26" height="24" style="margin-left:14px"><path d="M0 3h16v12h-4v4l-4-4H0z" fill="#fff"/><path d="M3 6.500h10M3 9h10M3 11.500h7" stroke="#071418"/><circle cx="16" cy="19" r="8" fill="#444b4f" stroke="#888"/><text x="12.500" y="23.500" font-size="11.500" font-weight="bold" fill="#fff" font-family="Open Sans">9</text></svg>
<span style="width:1px;height:40px;background:#4c5a5e"></span>
</div>
</footer>
<script src="https://cdn.jsdelivr.net/npm/bootstrap@5.3.0/dist/js/bootstrap.bundle.min.js"></script>
<script>
// Modifier stack rows: the marker shows which sub-object level each modifier passes up
const levels=['face','face','face','edge','','edge','','edge'];
const mark={face:'<path d="M0 0h10v11H0z" fill="#d1d1d1"/>',edge:'<path d="M9.500 1v9L1.500 5.500z" fill="none" stroke="#d1d1d1"/>','':''};
document.getElementById('stack').innerHTML=levels.map((l,i)=>`<div class="stk d-flex align-items-center${i?'':' on'}"><svg width="13" height="10" style="margin:0 8px 0 6px"><use href="#eye"/></svg><svg width="6" height="9" style="margin-right:7px"><path d="M0 0l6 4.500L0 9z" fill="#d1d1d1"/></svg><div class="stkname d-flex align-items-center justify-content-between"><span>Edit Poly</span><svg width="11" height="11" style="margin-right:4px">${mark[l]}</svg></div></div>`).join('');
// Time ruler: one tick per frame, a label every fifth
let r='<path d="M2.500-19v43M4.500-19v43" stroke="#999" stroke-dasharray="1 1"/><path d="M9 .5h1357" stroke="#161616" stroke-width="2"/><path d="M59 1h1257v25H59z" fill="#2a2a2a"/><path d="M62 2h7v24h-7z" fill="#7a7420"/>';
for(let f=0;f<=100;f++){const x=Math.round(65+f*12.454)+.5,m=f%5===0;
r+=`<path d="M${x} 0v${m?26:12}" stroke="${f?'#707070':'#c9bf4a'}"/>`;
if(m)r+=`<text x="${x-.5}" y="22.500" text-anchor="middle" fill="${f?'#b8b8b8':'#d9d060'}">${f}</text>`;}
r+='<g fill="none"><path d="M25 8v11" stroke="#d1d1d1" stroke-width="3" stroke-dasharray="1.500 1"/><path d="M28 13q3-8 5 0t4 0" stroke="#3bb" stroke-width="1.400"/></g>';
document.getElementById('ruler').innerHTML=r;
</script>
</body>
</html>
